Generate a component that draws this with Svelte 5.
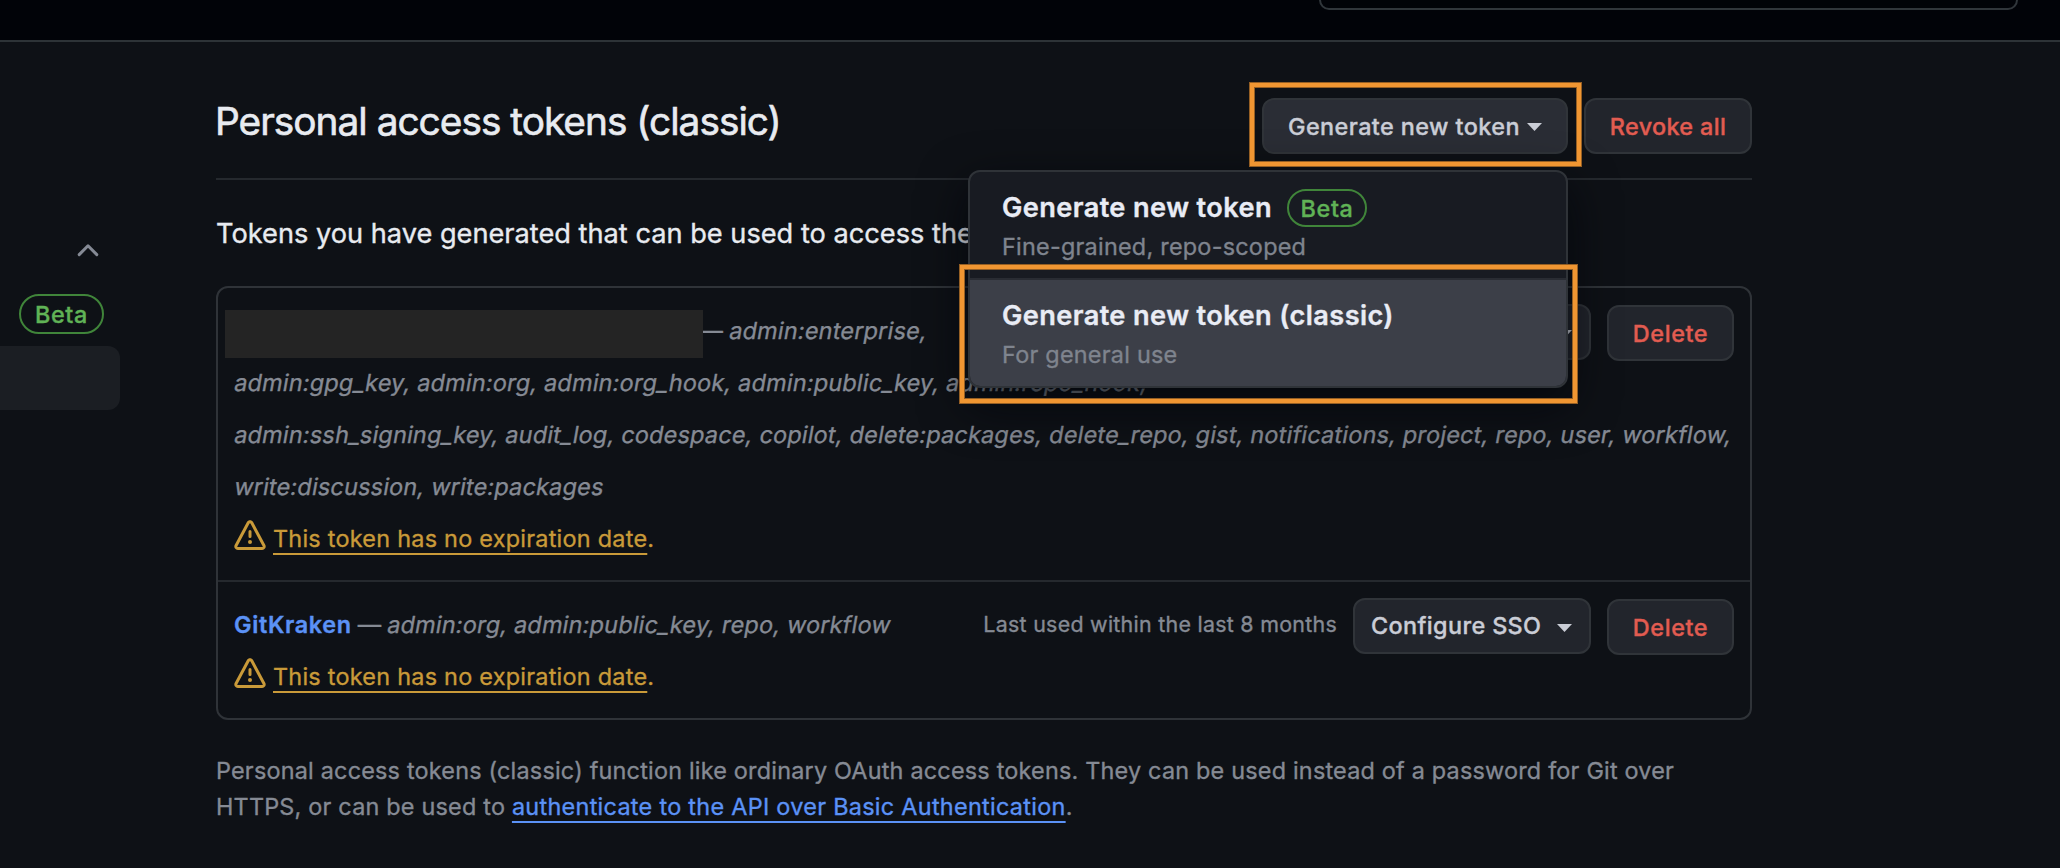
<script>
  const firstTokenLines = [
    'admin:gpg_key, admin:org, admin:org_hook, admin:public_key, admin:repo_hook,',
    'admin:ssh_signing_key, audit_log, codespace, copilot, delete:packages, delete_repo, gist, notifications, project, repo, user, workflow,',
    'write:discussion, write:packages'
  ];
</script>

{#snippet caret()}
  <svg class="caret" width="15" height="8" viewBox="0 0 15 8"><path d="M0 0h15L7.5 8z" fill="currentColor" /></svg>
{/snippet}

{#snippet expiry()}
  <div class="warn">
    <svg width="32" height="32" viewBox="0 0 16 16" fill="currentColor"><path d="M6.457 1.047c.659-1.234 2.427-1.234 3.086 0l6.082 11.378A1.75 1.75 0 0 1 14.082 15H1.918a1.75 1.75 0 0 1-1.543-2.575Zm1.763.707a.25.25 0 0 0-.44 0L1.698 13.132a.25.25 0 0 0 .22.368h12.164a.25.25 0 0 0 .22-.368Zm.53 3.996v2.5a.75.75 0 0 1-1.5 0v-2.5a.75.75 0 0 1 1.5 0ZM9 11a1 1 0 1 1-2 0 1 1 0 0 1 2 0Z" /></svg>
    <span><a href="#expiry">This token has no expiration date</a>.</span>
  </div>
{/snippet}

{#snippet actions()}
  <div class="actions">
    <span class="used">Last used within the last 8 months</span>
    <button class="btn sso">Configure SSO {@render caret()}</button>
    <button class="btn danger delete">Delete</button>
  </div>
{/snippet}

<div class="page">
  <header><div class="search"></div></header>
  <div class="body">
    <aside>
      <svg class="chevron" width="22" height="14" viewBox="0 0 22 14"><path d="M2.2 11.6 11 2.8l8.800 8.800" fill="none" stroke="#858a95" stroke-width="3" stroke-linecap="round" stroke-linejoin="round" /></svg>
      <span class="pill side">Beta</span>
      <div class="active"></div>
    </aside>
    <main>
      <div class="subhead">
        <h1>Personal access tokens (classic)</h1>
        <div class="top-actions">
          <div class="generate">
            <button class="btn open">Generate new token {@render caret()}</button>
            <div class="menu">
              <div class="item">
                <div class="name">Generate new token <span class="pill">Beta</span></div>
                <div class="desc">Fine-grained, repo-scoped</div>
              </div>
              <div class="item hover">
                <div class="name">Generate new token (classic)</div>
                <div class="desc">For general use</div>
              </div>
            </div>
            <div class="mark mark-button"></div>
            <div class="mark mark-item"></div>
          </div>
          <button class="btn danger revoke">Revoke all</button>
        </div>
      </div>
      <p class="intro">Tokens you have generated that can be used to access the GitHub API.</p>
      <section class="list">
        <div class="row">
          <div class="first">
            <div class="redacted"></div>
            <span class="dash cut">—</span>
            <em>admin:enterprise,</em>
            {@render actions()}
          </div>
          {#each firstTokenLines as line}
            <div class="line"><em>{line}</em></div>
          {/each}
          {@render expiry()}
        </div>
        <div class="row">
          <div class="first">
            <a class="token" href="#gitkraken">GitKraken</a>
            <span class="dash">—</span>
            <em>admin:org, admin:public_key, repo, workflow</em>
            {@render actions()}
          </div>
          {@render expiry()}
        </div>
      </section>
      <p class="note">
        Personal access tokens (classic) function like ordinary OAuth access tokens. They can be used instead of a password for Git over<br />
        HTTPS, or can be used to <a href="#basic">authenticate to the API over Basic Authentication</a>.
      </p>
    </main>
  </div>
</div>

<style>
  :global(body) { margin: 0; background: #0e1116; }
  .page { width: 2060px; height: 868px; overflow: hidden; background: #0e1116; color: #e8ebf0; font-family: Inter, "Liberation Sans", sans-serif; font-size: 23.4px; letter-spacing: 0.21px; white-space: nowrap; -webkit-text-stroke: 0.35px currentColor; }
  .page * { box-sizing: border-box; }
  header { display: flex; height: 42px; background: #010308; border-bottom: 2px solid #2d3337; }
  .search { width: 699px; height: 10px; margin-left: 1319px; border: 2px solid #30363b; border-top: 0; border-radius: 0 0 12px 12px; }
  .body { display: flex; }
  aside { width: 216px; display: flex; flex-direction: column; align-items: flex-start; padding-top: 201px; }
  .chevron { display: block; margin-left: 77px; }
  .active { width: 120px; height: 64px; margin-top: 12px; background: #1b1e23; border-radius: 0 12px 12px 0; }
  .pill { display: inline-flex; align-items: center; justify-content: center; width: 80px; height: 38px; border: 2px solid #40853a; border-radius: 20px; color: #60b356; font-size: 23.4px; font-weight: 500; letter-spacing: 0.6px; }
  .pill.side { width: 85px; height: 40px; margin: 37px 0 0 19px; }
  main { width: 1536px; padding-top: 48px; }
  .subhead { display: flex; justify-content: space-between; align-items: flex-start; height: 90px; border-bottom: 2px solid #25292e; }
  h1 { margin: 0 0 0 -1px; line-height: 61px; font-size: 38.8px; font-weight: 400; letter-spacing: -0.99px; -webkit-text-stroke-width: 0.6px; }
  .top-actions { display: flex; gap: 16px; padding-top: 8px; }
  .generate { position: relative; }
  .btn { display: flex; align-items: center; height: 56px; padding: 0; border: 2px solid #303439; border-radius: 12px; background: #22252c; color: #cacdd6; font: 500 23.4px Inter, "Liberation Sans", sans-serif; letter-spacing: 0.43px; white-space: nowrap; }
  .btn.open { width: 306px; padding-left: 24px; background: #2a2d35; }
  .open .caret { margin-left: 7px; margin-top: 2px; }
  .danger { justify-content: center; color: #e25c51; }
  .revoke { width: 168px; }
  .menu { position: absolute; z-index: 2; top: 72px; right: 0; width: 600px; height: 218px; border: 2px solid #2f3338; border-radius: 12px; background: #181b22; box-shadow: 0 16px 48px rgba(1, 4, 9, 0.75); }
  .item { height: 108px; padding: 15px 0 0 32px; border-bottom: 2px solid #292c33; }
  .item.hover { height: 106px; border-bottom: 0; border-radius: 0 0 10px 10px; background: #3c3f48; }
  .name { display: flex; align-items: center; height: 40px; color: #e9ecf5; font-size: 27.2px; font-weight: 600; letter-spacing: 0.39px; }
  .name .pill { margin-left: 15px; margin-top: 2px; }
  .desc { line-height: 40px; color: #7f848e; letter-spacing: 0.25px; }
  .mark { position: absolute; z-index: 3; border: 4px solid #f09632; box-shadow: 0 0 0 1px #955f24, inset 0 0 0 1px #955f24; }
  .mark-button { left: -12px; top: -15px; width: 331px; height: 83px; }
  .mark-item { left: -302px; top: 167px; width: 617px; height: 138px; }
  .intro { margin: 33px 0 0; line-height: 42px; font-size: 27.2px; letter-spacing: 0; }
  .list { margin-top: 31px; border: 2px solid #2f3338; border-radius: 12px; }
  .row { padding: 17px 16px 15px; }
  .row + .row { border-top: 2px solid #25292e; }
  .first { display: flex; height: 52px; line-height: 52px; color: #858a94; }
  .line { height: 52px; line-height: 52px; color: #858a94; }
  em { display: inline-block; margin-left: -1.3px; font-style: normal; letter-spacing: 0.23px; transform: skewX(-10deg); transform-origin: 0 35px; }
  .redacted { position: relative; z-index: 1; width: 478px; height: 48px; margin: 5px 0 0 -9.5px; background: #242424; }
  .dash { margin-left: 6px; margin-right: 6px; }
  .dash.cut { margin-left: -3px; }
  .token { color: #5b92f6; font-weight: 600; letter-spacing: 0.65px; text-decoration: none; }
  .actions { display: flex; align-items: flex-start; margin: -1px 0 0 auto; }
  .used { margin-right: 16px; font-size: 21.4px; letter-spacing: 0.28px; }
  .sso { width: 238px; padding-left: 16px; padding-bottom: 2px; letter-spacing: 0.38px; }
  .sso .caret { margin-left: 16px; margin-top: 6px; }
  .delete { width: 127px; margin: 1px 0 0 16px; letter-spacing: 0.6px; }
  .revoke { letter-spacing: 0.35px; }
  .warn { display: flex; height: 52px; line-height: 52px; color: #c99a39; letter-spacing: 0.26px; }
  .warn svg { margin: 7px 7px 0 0; }
  a { color: inherit; text-decoration-line: underline; text-decoration-thickness: 2px; text-underline-offset: 6px; text-decoration-skip-ink: none; }
  .note { margin: 33px 0 0; line-height: 36px; color: #858a94; }
  .note a { color: #5b92f6; letter-spacing: 0.3px; }
</style>
